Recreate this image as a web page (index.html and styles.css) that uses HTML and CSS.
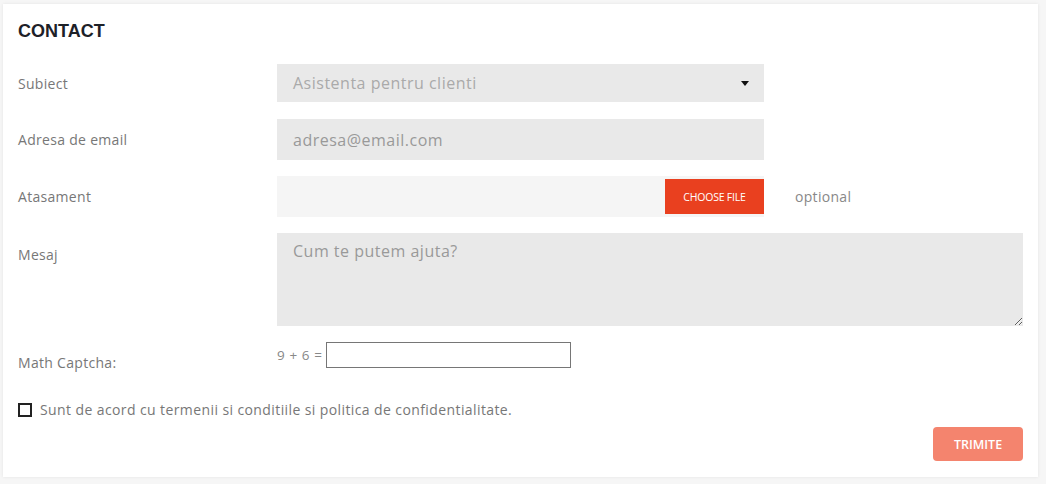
FILE: index.html
```html
<!DOCTYPE html>
<html lang="ro">
<head>
  <meta charset="UTF-8" />
  <title>Contact</title>
  <link rel="stylesheet" href="styles.css">
</head>
<body>

  <div class="card">
    <h1>CONTACT</h1>

    <form class="contact-form">
      <div class="row row-select">
        <label class="label">Subiect</label>
        <div class="select-box">
          <span>Asistenta pentru clienti</span>
          <svg class="caret" width="8" height="5" viewBox="0 0 8 5"><path d="M0 0h8L4 5z" fill="#111"/></svg>
        </div>
      </div>

      <div class="row row-email">
        <label class="label">Adresa de email</label>
        <input class="text-input" type="email" placeholder="adresa@email.com" />
      </div>

      <div class="row row-file">
        <label class="label">Atasament</label>
        <div class="file-box">
          <button type="button" class="file-btn">CHOOSE FILE</button>
        </div>
        <span class="optional">optional</span>
      </div>

      <div class="row row-msg">
        <label class="label">Mesaj</label>
        <textarea class="message" placeholder="Cum te putem ajuta?"></textarea>
      </div>

      <div class="row row-captcha">
        <label class="label">Math Captcha:</label>
        <div class="captcha">
          <span>9 + 6 =</span>
          <input type="text" class="captcha-input" />
        </div>
      </div>

      <div class="terms">
        <span class="checkbox"></span>
        <span>Sunt de acord cu termenii si conditiile si politica de confidentialitate.</span>
      </div>

      <div class="actions">
        <button type="submit" class="submit-btn">TRIMITE</button>
      </div>
    </form>
  </div>

</body>
</html>
```

FILE: styles.css
```css
body {
  margin: 0;
  padding: 4px 8px 7px 3px;
  background: #f6f6f6;
  font-family: "Open Sans", sans-serif;
}
.card {
  background: #fff;
  box-shadow: 0 0 3px rgba(0, 0, 0, 0.08);
  padding: 17px 15px 16px 15px;
  height: 440px;
}
h1 {
  margin: 0;
  font-family: "Liberation Sans", Arial, sans-serif;
  font-size: 18px;
  font-weight: bold;
  color: #1d2127;
  line-height: 20px;
}
.contact-form {
  margin-top: 23px;
}
.row {
  display: flex;
  align-items: center;
  margin-bottom: 16px;
}
.label {
  width: 259px;
  flex-shrink: 0;
  font-size: 14px;
  letter-spacing: 0.3px;
  color: #777;
}
.select-box {
  width: 487px;
  height: 38px;
  background: #e9e9e9;
  display: flex;
  align-items: center;
  justify-content: space-between;
  padding: 0 15px 0 16px;
  box-sizing: border-box;
  font-size: 16px;
  letter-spacing: 0.5px;
  color: #aaa;
}
.row-select {
  margin-bottom: 17px;
}
.text-input {
  width: 487px;
  height: 41px;
  border: none;
  background: #e9e9e9;
  padding: 0 16px;
  box-sizing: border-box;
  font-family: inherit;
  font-size: 16px;
  letter-spacing: 0.5px;
  outline: none;
}
.text-input::placeholder {
  color: #999;
}
.file-box {
  width: 487px;
  height: 41px;
  background: #f5f5f5;
  display: flex;
  justify-content: flex-end;
  align-items: center;
}
.file-btn {
  width: 99px;
  height: 35px;
  background: #e9401f;
  color: #fff;
  border: none;
  font-family: inherit;
  font-size: 10.5px;
  letter-spacing: -0.2px;
}
.optional {
  margin-left: 31px;
  font-size: 14px;
  letter-spacing: 0.3px;
  color: #888;
}
.row-msg {
  align-items: flex-start;
}
.row-msg .label {
  padding-top: 12px;
}
.message {
  flex: 1;
  height: 93px;
  border: none;
  background: #e9e9e9;
  padding: 7px 16px;
  box-sizing: border-box;
  font-family: inherit;
  font-size: 16px;
  letter-spacing: 0.5px;
  resize: vertical;
  outline: none;
}
.message::placeholder {
  color: #999;
}
.row-captcha {
  align-items: flex-start;
  margin-bottom: 0;
}
.row-captcha .label {
  padding-top: 11px;
}
.captcha {
  display: flex;
  align-items: center;
  gap: 3px;
  font-size: 13.5px;
  letter-spacing: 0.6px;
  color: #888;
}
.captcha-input {
  width: 245px;
  height: 26px;
  box-sizing: border-box;
  border: 1px solid #767676;
  margin: 0;
}
.terms {
  display: flex;
  align-items: center;
  margin-top: 28px;
  font-size: 14px;
  letter-spacing: 0.4px;
  color: #777;
}
.checkbox {
  width: 10px;
  height: 10px;
  border: 2px solid #222;
  margin-right: 8px;
}
.actions {
  display: flex;
  justify-content: flex-end;
  margin-top: 8px;
}
.submit-btn {
  width: 90px;
  height: 34px;
  background: #f4846e;
  color: #fff;
  border: none;
  border-radius: 4px;
  font-family: inherit;
  font-size: 12.5px;
  font-weight: 600;
}
```
